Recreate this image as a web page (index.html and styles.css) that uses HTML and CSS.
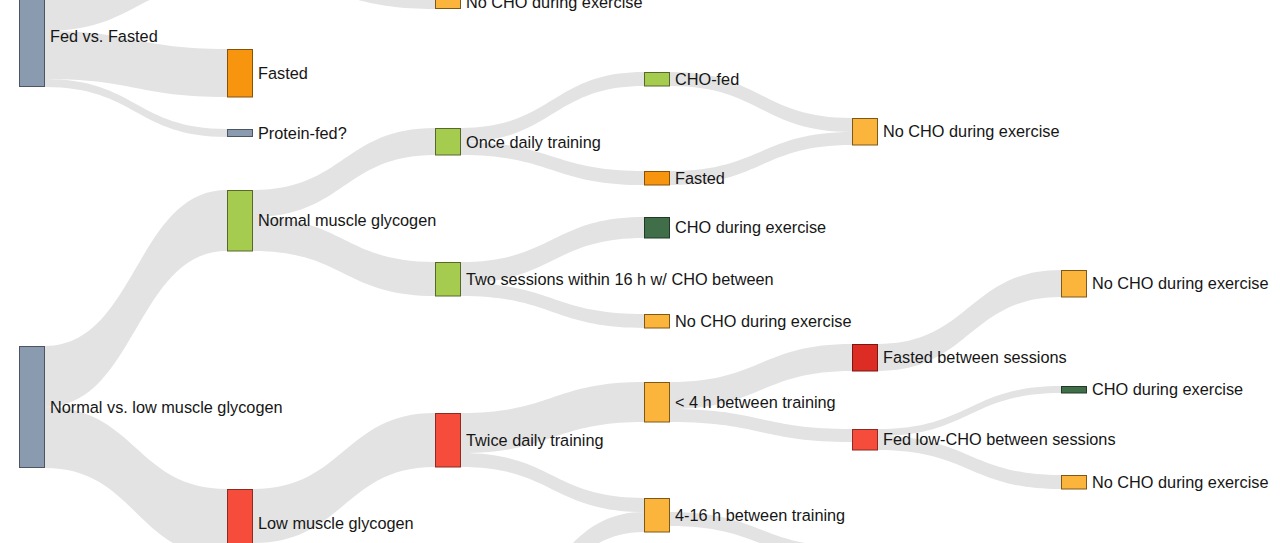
FILE: index.html
```html
<!DOCTYPE html>
<html lang="en">
<head>
<meta charset="utf-8">
<title>Sankey</title>
<link rel="stylesheet" href="styles.css">
</head>
<body>
<div class="chart">
<svg class="sankey" width="1280" height="543" viewBox="0 0 1280 543" xmlns="http://www.w3.org/2000/svg">
  <g class="links">
    <path class="link" d="M45,-15 C136,-15 136,-63 227,-63 L227,-17 C136,-17 136,31 45,31 Z"/>
    <path class="link" d="M45,31 C136,31 136,49 227,49 L227,97 C136,97 136,79 45,79 Z"/>
    <path class="link" d="M45,79 C136,79 136,129 227,129 L227,137 C136,137 136,87 45,87 Z"/>
    <path class="link" d="M45,346 C136,346 136,190 227,190 L227,251 C136,251 136,407 45,407 Z"/>
    <path class="link" d="M45,407 C136,407 136,489 227,489 L227,557 C136,557 136,468 45,468 Z"/>
    <path class="link" d="M253,-31 C344,-31 344,-5 435,-5 L435,9 C344,9 344,-17 253,-17 Z"/>
    <path class="link" d="M253,190 C344,190 344,128 435,128 L435,155 C344,155 344,217 253,217 Z"/>
    <path class="link" d="M253,217 C344,217 344,262 435,262 L435,296 C344,296 344,251 253,251 Z"/>
    <path class="link" d="M253,489 C344,489 344,413 435,413 L435,467 C344,467 344,543 253,543 Z"/>
    <path class="link" d="M461,128 C552.5,128 552.5,72 644,72 L644,86 C552.5,86 552.5,142 461,142 Z"/>
    <path class="link" d="M461,142 C552.5,142 552.5,171 644,171 L644,185 C552.5,185 552.5,155 461,155 Z"/>
    <path class="link" d="M461,262 C552.5,262 552.5,217 644,217 L644,238 C552.5,238 552.5,283 461,283 Z"/>
    <path class="link" d="M461,283 C552.5,283 552.5,314 644,314 L644,328 C552.5,328 552.5,296 461,296 Z"/>
    <path class="link" d="M461,413 C552.5,413 552.5,382 644,382 L644,422 C552.5,422 552.5,453 461,453 Z"/>
    <path class="link" d="M461,453 C552.5,453 552.5,498 644,498 L644,512 C552.5,512 552.5,467 461,467 Z"/>
    <path class="link" d="M461,619 C552.5,619 552.5,512 644,512 L644,532 C552.5,532 552.5,640 461,640 Z"/>
    <path class="link" d="M670,72 C761,72 761,118 852,118 L852,132 C761,132 761,86 670,86 Z"/>
    <path class="link" d="M670,171 C761,171 761,132 852,132 L852,145 C761,145 761,185 670,185 Z"/>
    <path class="link" d="M670,382 C761,382 761,344 852,344 L852,371 C761,371 761,409 670,409 Z"/>
    <path class="link" d="M670,409 C761,409 761,429 852,429 L852,442 C761,442 761,422 670,422 Z"/>
    <path class="link" d="M670,512 C761,512 761,547 852,547 L852,561 C761,561 761,526 670,526 Z"/>
    <path class="link" d="M878,344 C969.5,344 969.5,270 1061,270 L1061,297 C969.5,297 969.5,371 878,371 Z"/>
    <path class="link" d="M878,429 C969.5,429 969.5,386 1061,386 L1061,393 C969.5,393 969.5,436 878,436 Z"/>
    <path class="link" d="M878,436 C969.5,436 969.5,475 1061,475 L1061,489 C969.5,489 969.5,450 878,450 Z"/>
  </g>
  <g class="nodes">
    <rect class="node slate" x="19.5" y="-15" width="25" height="101.5"/>
    <rect class="node slate" x="19.5" y="346.5" width="25" height="121"/>

    <rect class="node green" x="227.5" y="-63" width="25" height="45.5"/>
    <rect class="node orange" x="227.5" y="49.5" width="25" height="47.5"/>
    <rect class="node slate" x="227.5" y="129.5" width="25" height="7"/>
    <rect class="node green" x="227.5" y="190.5" width="25" height="60.5"/>
    <rect class="node red" x="227.5" y="489.5" width="25" height="67.5"/>

    <rect class="node yellow" x="435.5" y="-5" width="25" height="13.5"/>
    <rect class="node green" x="435.5" y="128.5" width="25" height="26.5"/>
    <rect class="node green" x="435.5" y="262.5" width="25" height="33.5"/>
    <rect class="node red" x="435.5" y="413.5" width="25" height="53.5"/>

    <rect class="node green" x="644.5" y="72.5" width="25" height="13.5"/>
    <rect class="node orange" x="644.5" y="171.5" width="25" height="13.5"/>
    <rect class="node darkgreen" x="644.5" y="217.5" width="25" height="20.5"/>
    <rect class="node yellow" x="644.5" y="314.5" width="25" height="13.5"/>
    <rect class="node yellow" x="644.5" y="382.5" width="25" height="39.5"/>
    <rect class="node yellow" x="644.5" y="498.5" width="25" height="33.5"/>

    <rect class="node yellow" x="852.5" y="118.5" width="25" height="26.5"/>
    <rect class="node darkred" x="852.5" y="344.5" width="25" height="26.5"/>
    <rect class="node red" x="852.5" y="429.5" width="25" height="20.5"/>

    <rect class="node yellow" x="1061.5" y="270.5" width="25" height="26.5"/>
    <rect class="node darkgreen" x="1061.5" y="386.5" width="25" height="6.5"/>
    <rect class="node yellow" x="1061.5" y="475.5" width="25" height="13.5"/>
  </g>
  <g class="labels">
    <text class="label" x="50" y="41.5">Fed vs. Fasted</text>
    <text class="label" x="50" y="412.5">Normal vs. low muscle glycogen</text>

    <text class="label" x="258" y="78.5">Fasted</text>
    <text class="label" x="258" y="138.5">Protein-fed?</text>
    <text class="label" x="258" y="226">Normal muscle glycogen</text>
    <text class="label" x="258" y="528.5">Low muscle glycogen</text>

    <text class="label" x="466" y="7.5">No CHO during exercise</text>
    <text class="label" x="466" y="147.5">Once daily training</text>
    <text class="label" x="466" y="284.5">Two sessions within 16 h w/ CHO between</text>
    <text class="label" x="466" y="445.5">Twice daily training</text>

    <text class="label" x="675" y="84.5">CHO-fed</text>
    <text class="label" x="675" y="183.5">Fasted</text>
    <text class="label" x="675" y="233">CHO during exercise</text>
    <text class="label" x="675" y="326.5">No CHO during exercise</text>
    <text class="label" x="675" y="407.5">&lt; 4 h between training</text>
    <text class="label" x="675" y="520.5">4-16 h between training</text>

    <text class="label" x="883" y="137">No CHO during exercise</text>
    <text class="label" x="883" y="363">Fasted between sessions</text>
    <text class="label" x="883" y="445">Fed low-CHO between sessions</text>

    <text class="label" x="1092" y="289">No CHO during exercise</text>
    <text class="label" x="1092" y="395">CHO during exercise</text>
    <text class="label" x="1092" y="487.5">No CHO during exercise</text>
  </g>
</svg>
</div>
</body>
</html>
```
FILE: styles.css
```css
html, body {
  margin: 0;
  padding: 0;
  background: #ffffff;
}

body {
  width: 1280px;
  height: 543px;
  overflow: hidden;
  font-family: "Liberation Sans", Arial, sans-serif;
}

.chart {
  width: 1280px;
  height: 543px;
  overflow: hidden;
}

.sankey {
  display: block;
  overflow: hidden;
}

.link {
  fill: #e3e3e3;
}

.node {
  stroke-width: 1;
}

.slate { fill: #8a9aaf; stroke: #4d5561; }
.green { fill: #a5cc4e; stroke: #56692a; }
.orange { fill: #f7950e; stroke: #87510a; }
.yellow { fill: #fbb43c; stroke: #7d5816; }
.darkgreen { fill: #3f6e48; stroke: #213a27; }
.red { fill: #f54c3b; stroke: #8c2b21; }
.darkred { fill: #dc2c23; stroke: #7a1712; }

.label {
  font-family: "Liberation Sans", Arial, sans-serif;
  font-size: 16.3px;
  fill: #161616;
}
```
